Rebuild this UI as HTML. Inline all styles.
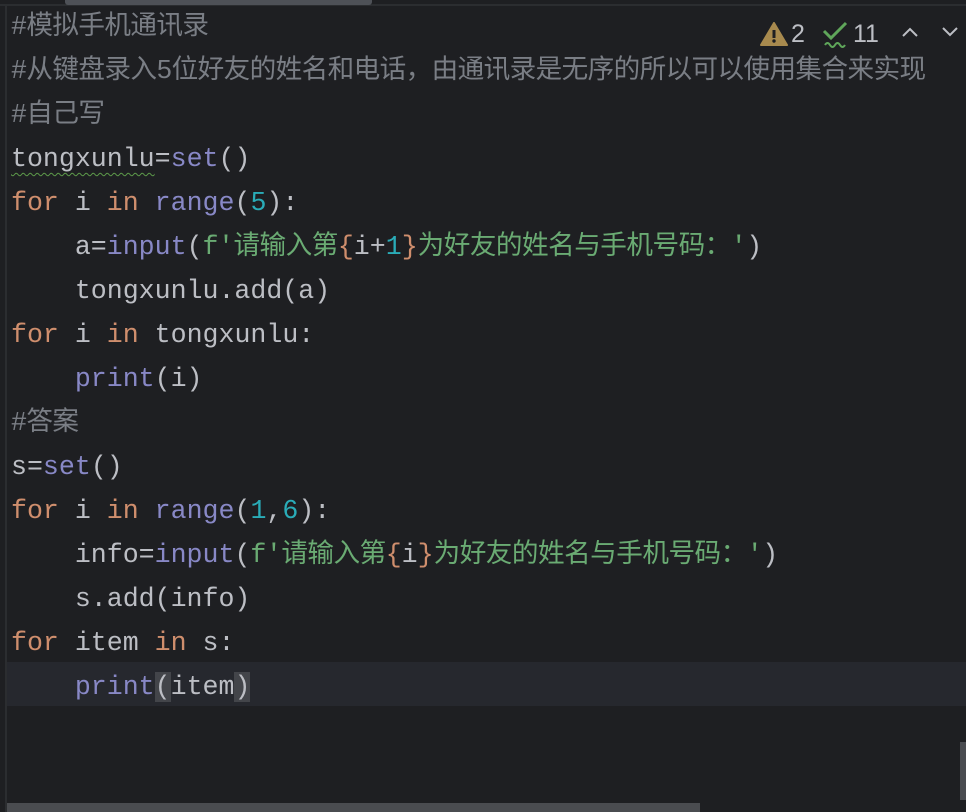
<!DOCTYPE html>
<html><head><meta charset="utf-8"><style>
html,body{margin:0;padding:0;background:#1e1f22;width:966px;height:812px;overflow:hidden;position:relative}
.code{position:absolute;left:11px;top:5px;font-family:"Liberation Mono","Noto Sans CJK SC",monospace;font-size:26.6px;line-height:44px;color:#bcbec4}
.l{height:44px;white-space:pre}
.k{color:#cf8e6d}.b{color:#8888c6}.s{color:#6aab73;letter-spacing:-0.5px}.n{color:#2aacb8}.c{color:#7a7e85;letter-spacing:-0.6px}
.wv{text-decoration:underline wavy #5d9b4a;text-decoration-thickness:1px;text-underline-offset:6px}
.hl{position:absolute;left:7px;right:0;top:662px;height:44px;background:#26282e}
.br{background:#43454a}
</style></head><body>
<div style="position:absolute;left:0;top:4px;width:966px;height:2px;background:#2b2d30"></div>
<div style="position:absolute;left:65px;top:0;width:307px;height:5px;background:#4e5157;border-radius:0 0 3px 3px"></div>
<div style="position:absolute;left:5px;top:6px;width:2px;height:806px;background:#2b2d30"></div>
<div class="hl"></div>
<div style="position:absolute;left:7px;top:803px;width:693px;height:9px;background:#4a4c50"></div>
<div style="position:absolute;left:960px;top:742px;width:6px;height:58px;background:#4a4c50"></div>
<div class="code"><div class="l c">#模拟手机通讯录</div><div class="l c">#从键盘录入5位好友的姓名和电话，由通讯录是无序的所以可以使用集合来实现</div><div class="l c">#自己写</div><div class="l"><span class="wv">tongxunlu</span>=<span class="b">set</span>()</div><div class="l"><span class="k">for</span> i <span class="k">in</span> <span class="b">range</span>(<span class="n">5</span>):</div><div class="l">    a=<span class="b">input</span>(<span class="s">f'请输入第</span><span class="k">{</span>i+<span class="n">1</span><span class="k">}</span><span class="s">为好友的姓名与手机号码：'</span>)</div><div class="l">    tongxunlu.add(a)</div><div class="l"><span class="k">for</span> i <span class="k">in</span> tongxunlu:</div><div class="l">    <span class="b">print</span>(i)</div><div class="l c">#答案</div><div class="l">s=<span class="b">set</span>()</div><div class="l"><span class="k">for</span> i <span class="k">in</span> <span class="b">range</span>(<span class="n">1</span>,<span class="n">6</span>):</div><div class="l">    info=<span class="b">input</span>(<span class="s">f'请输入第</span><span class="k">{</span>i<span class="k">}</span><span class="s">为好友的姓名与手机号码：'</span>)</div><div class="l">    s.add(info)</div><div class="l"><span class="k">for</span> item <span class="k">in</span> s:</div><div class="l">    <span class="b">print</span><span class="br">(</span>item<span class="br">)</span></div></div>
<div style="position:absolute;left:760px;top:20px;width:200px;height:30px;font-family:'Liberation Sans',sans-serif;font-size:25px;color:#bcbec4">
<svg style="position:absolute;left:0;top:2px" width="28" height="24" viewBox="0 0 28 24"><path d="M14 1 L27 23 L1 23 Z" fill="#a88a4e" stroke="#a88a4e" stroke-linejoin="round" stroke-width="2"/><rect x="12.5" y="8" width="3" height="8" fill="#1e1f22"/><circle cx="14" cy="19" r="1.7" fill="#1e1f22"/></svg>
<span style="position:absolute;left:31px;top:0">2</span>
<svg style="position:absolute;left:62px;top:1px" width="28" height="28" viewBox="0 0 28 28"><path d="M2 10 L9 17 L24 2" fill="none" stroke="#5fa65a" stroke-width="3"/><path d="M3 24 q2.5 -4 5 0 t5 0 t5 0 t5 0" fill="none" stroke="#5fa65a" stroke-width="2"/></svg>
<span style="position:absolute;left:93px;top:0">11</span>
<svg style="position:absolute;left:141px;top:6px" width="18" height="12" viewBox="0 0 18 12"><path d="M2 10 L9 3 L16 10" fill="none" stroke="#bcbec4" stroke-width="2"/></svg>
<svg style="position:absolute;left:181px;top:6px" width="18" height="12" viewBox="0 0 18 12"><path d="M2 2 L9 9 L16 2" fill="none" stroke="#bcbec4" stroke-width="2"/></svg>
</div>
</body></html>
